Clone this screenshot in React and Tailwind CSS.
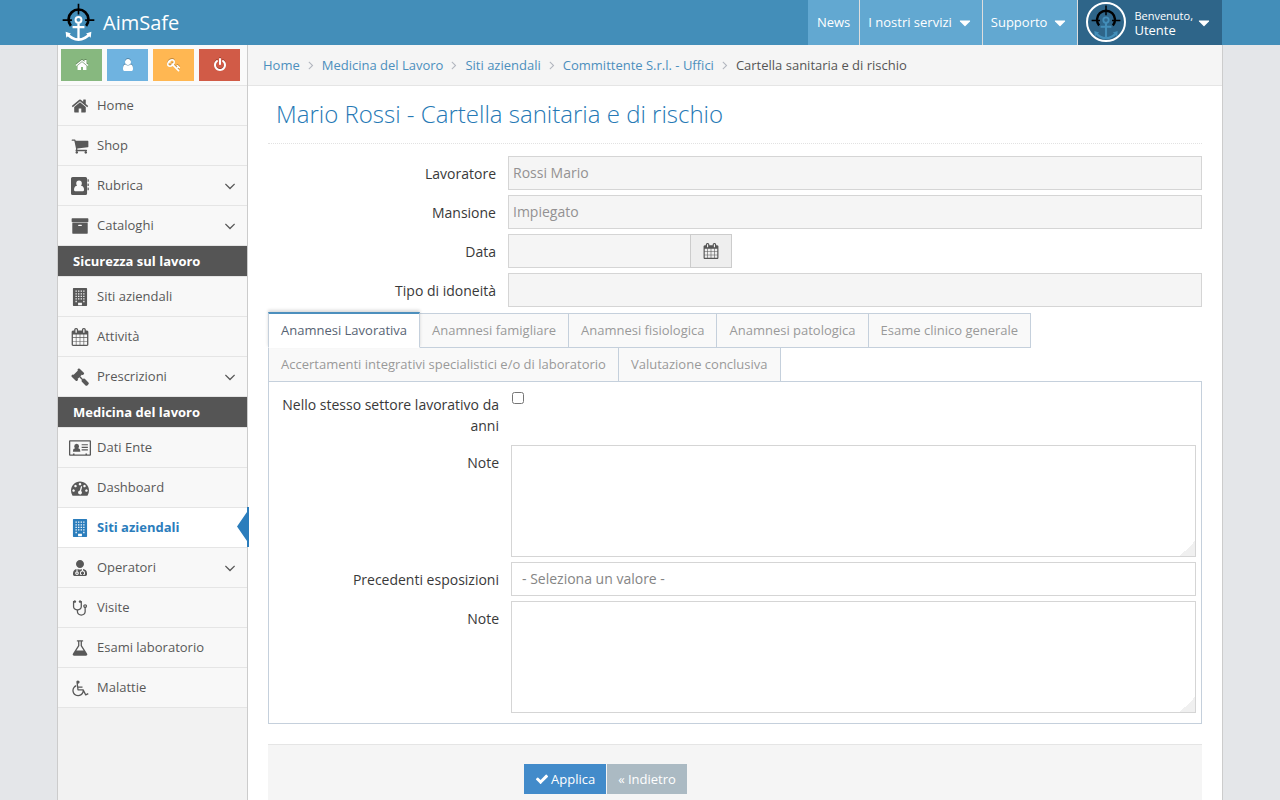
import React, { useState } from 'react';
import { FaUserMd } from 'react-icons/fa';

// single-path icons, all on a 1792 unit grid
const paths = {
  home: 'M1472 992v480q0 26-19 45t-45 19h-384v-384h-256v384h-384q-26 0-45-19t-19-45v-480q0-1 .5-3t.5-3l575-474 575 474q1 2 1 6zm223-69l-62 74q-8 9-21 11h-3q-13 0-21-7l-692-577-692 577q-12 8-24 7-13-2-21-11l-62-74q-8-10-7-23.5t11-21.5l719-599q32-26 76-26t76 26l244 204v-195q0-14 9-23t23-9h192q14 0 23 9t9 23v408l219 182q10 8 11 21.5t-7 23.5z',
  user: 'M1536 1399q0 109-62.5 187t-150.5 78h-854q-88 0-150.5-78t-62.5-187q0-85 8.5-160.5t31.5-152 58.5-131 94-89 134.5-34.5q131 128 313 128t313-128q76 0 134.5 34.5t94 89 58.5 131 31.5 152 8.5 160.5zm-256-887q0 159-112.5 271.5t-271.5 112.5-271.5-112.5-112.5-271.5 112.5-271.5 271.5-112.5 271.5 112.5 112.5 271.5z',
  key: 'M832 512q0-80-56-136t-136-56-136 56-56 136q0 42 19 83-41-19-83-19-80 0-136 56t-56 136 56 136 136 56 136-56 56-136q0-42-19-83 41 19 83 19 80 0 136-56t56-136zm851 704q0 17-49 66t-66 49q-9 0-28.5-16t-36.5-33-38.5-40-24.5-26l-96 96 220 220q28 28 28 68 0 42-39 81t-81 39q-40 0-68-28l-671-671q-176 131-365 131-163 0-265.5-102.5t-102.5-265.5q0-160 95-313t248-248 313-95q163 0 265.5 102.5t102.5 265.5q0 189-131 365l355 355 96-96q-3-3-26-24.5t-40-38.5-33-36.5-16-28.5q0-17 49-66t66-49q13 0 23 10 6 6 46 44.5t82 79.5 86.5 86 73 78 28.5 41z',
  power: 'M1664 896q0 156-61 298t-164 245-245 164-298 61-298-61-245-164-164-245-61-298q0-182 80.5-343t226.5-270q43-32 95.5-25t83.5 50q32 42 24.5 94.5t-49.5 84.5q-98 74-151.5 181t-53.5 228q0 104 40.5 198.5t109.5 163.5 163.5 109.5 198.5 40.5 198.5-40.5 163.5-109.5 109.5-163.5 40.5-198.5q0-121-53.5-228t-151.5-181q-42-32-49.5-84.5t24.5-94.5q31-43 84-50t95 25q146 109 226.5 270t80.5 343zm-640-768v640q0 52-38 90t-90 38-90-38-38-90v-640q0-52 38-90t90-38 90 38 38 90z',
  cart: 'M704 1536q0 52-38 90t-90 38-90-38-38-90 38-90 90-38 90 38 38 90zm896 0q0 52-38 90t-90 38-90-38-38-90 38-90 90-38 90 38 38 90zm128-1088v512q0 24-16.5 42.5t-40.5 21.5l-1044 122q13 60 13 70 0 16-24 64h920q26 0 45 19t19 45-19 45-45 19h-1024q-26 0-45-19t-19-45q0-11 8-31.5t16-36 21.5-40 15.5-29.5l-177-823h-204q-26 0-45-19t-19-45 19-45 45-19h256q16 0 28.5 6.5t19.5 15.5 13 24.5 8 26 5.5 29.5 4.5 26h1201q26 0 45 19t19 45z',
  book: 'M160 0h1280q160 0 160 160v1472q0 160-160 160h-1280q-160 0-160-160v-1472q0-160 160-160zM1650 224h70q50 0 50 50v160q0 50-50 50h-70zM1650 640h70q50 0 50 50v160q0 50-50 50h-70zM1650 1056h70q50 0 50 50v160q0 50-50 50h-70zM800 340q-280 0-280 290 0 150 90 250-310 20-310 420 0 110 100 110h800q100 0 100-110 0-400-310-420 90-100 90-250 0-290-280-290z',
  archive: 'M1088 832q0-26-19-45t-45-19h-256q-26 0-45 19t-19 45 19 45 45 19h256q26 0 45-19t19-45zm576-192v960q0 26-19 45t-45 19h-1408q-26 0-45-19t-19-45v-960q0-26 19-45t45-19h1408q26 0 45 19t19 45zm64-448v256q0 26-19 45t-45 19h-1536q-26 0-45-19t-19-45v-256q0-26 19-45t45-19h1536q26 0 45 19t19 45z',
  building: 'M256 0h1280q64 0 64 64v1664q0 64-64 64h-1280q-64 0-64-64v-1664q0-64 64-64zM448 256v128h128v-128zM704 256v128h128v-128zM960 256v128h128v-128zM1216 256v128h128v-128zM448 512v128h128v-128zM704 512v128h128v-128zM960 512v128h128v-128zM1216 512v128h128v-128zM448 768v128h128v-128zM704 768v128h128v-128zM960 768v128h128v-128zM1216 768v128h128v-128zM448 1024v128h128v-128zM704 1024v128h128v-128zM960 1024v128h128v-128zM1216 1024v128h128v-128zM448 1280v128h128v-128zM1216 1280v128h128v-128zM704 1472v256h384v-256z',
  calendar: 'M192 1664h288v-288h-288v288zm352 0h320v-288h-320v288zm-352-352h288v-320h-288v320zm352 0h320v-320h-320v320zm-352-384h288v-288h-288v288zm736 736h320v-288h-320v288zm-384-736h320v-288h-320v288zm768 736h288v-288h-288v288zm-384-352h320v-320h-320v320zm-352-864v-288q0-13-9.5-22.5t-22.5-9.5h-64q-13 0-22.5 9.5t-9.5 22.5v288q0 13 9.5 22.5t22.5 9.5h64q13 0 22.5-9.5t9.5-22.5zm736 864h288v-320h-288v320zm-384-384h320v-288h-320v288zm384 0h288v-288h-288v288zm32-480v-288q0-13-9.5-22.5t-22.5-9.5h-64q-13 0-22.5 9.5t-9.5 22.5v288q0 13 9.5 22.5t22.5 9.5h64q13 0 22.5-9.5t9.5-22.5zm384-64v1280q0 52-38 90t-90 38h-1408q-52 0-90-38t-38-90v-1280q0-52 38-90t90-38h128v-96q0-66 47-113t113-47h64q66 0 113 47t47 113v96h384v-96q0-66 47-113t113-47h64q66 0 113 47t47 113v96h128q52 0 90 38t38 90z',
  gavel: 'M1771 1536q0 53-37 90l-107 108q-39 37-91 37-53 0-90-37l-363-364q-38-36-38-90 0-53 43-96l-256-256-126 126q-14 14-34 14t-34-14q2 2 12.5 12t12.5 13 10 11.5 10 13.5 6 13.5 5.5 16.5 1.5 18q0 38-28 68-3 3-16.5 18t-19 20.5-18.5 16.5-22 15.5-22 9-26 4.5q-40 0-68-28l-408-408q-28-28-28-68 0-13 4.5-26t9-22 15.5-22 16.5-18.5 20.5-19 18-16.5q30-28 68-28 10 0 18 1.5t16.5 5.5 13.5 6 13.5 10 11.5 10 13 12.5 12 12.5q-14-14-14-34t14-34l348-348q14-14 34-14t34 14q-2-2-12.5-12t-12.5-13-10-11.5-10-13.5-6-13.5-5.5-16.5-1.5-18q0-38 28-68 3-3 16.5-18t19-20.5 18.5-16.5 22-15.5 22-9 26-4.5q40 0 68 28l408 408q28 28 28 68 0 13-4.5 26t-9 22-15.5 22-16.5 18.5-20.5 19-18 16.5q-30 28-68 28-10 0-18-1.5t-16.5-5.5-13.5-6-13.5-10-11.5-10-13-12.5-12-12.5q14 14 14 34t-14 34l-126 126 256 256q43-43 96-43 52 0 91 37l363 363q37 39 37 91z',
  card: 'M-100 128h1992q100 0 100 100v1336q0 100-100 100h-1992q-100 0-100-100v-1336q0-100 100-100zM-72 256v1280h264v-96h160v96h1088v-96h160v96h264v-1280zM560 480q240 0 240 250 0 120-80 200 210 20 210 290 0 60-60 60h-620q-60 0-60-60 0-270 210-290-80-80-80-200 0-250 240-250zM1060 512h620v120h-620zM1060 768h620v120h-620zM1060 1024h620v120h-620z',
  dashboard: 'M384 1152q0-53-37.5-90.5t-90.5-37.5-90.5 37.5-37.5 90.5 37.5 90.5 90.5 37.5 90.5-37.5 37.5-90.5zm192-448q0-53-37.5-90.5t-90.5-37.5-90.5 37.5-37.5 90.5 37.5 90.5 90.5 37.5 90.5-37.5 37.5-90.5zm428 481l101-382q6-26-7.5-48.5t-38.5-29.5-48 6.5-30 39.5l-101 382q-60 5-107 43.5t-63 98.5q-20 77 20 146t117 89 146-20 89-117q16-60-6-117t-72-91zm660-33q0-53-37.5-90.5t-90.5-37.5-90.5 37.5-37.5 90.5 37.5 90.5 90.5 37.5 90.5-37.5 37.5-90.5zm-640-640q0-53-37.5-90.5t-90.5-37.5-90.5 37.5-37.5 90.5 37.5 90.5 90.5 37.5 90.5-37.5 37.5-90.5zm448 192q0-53-37.5-90.5t-90.5-37.5-90.5 37.5-37.5 90.5 37.5 90.5 90.5 37.5 90.5-37.5 37.5-90.5zm320 448q0 261-141 483-19 29-54 29h-1402q-35 0-54-29-141-221-141-483 0-182 71-348t191-286 286-191 348-71 348 71 286 191 191 286 71 348z',
  stethoscope: 'M1472 704q0-26-19-45t-45-19-45 19-19 45 19 45 45 19 45-19 19-45zm128 0q0 62-35.5 111t-92.5 70v395q0 159-131.5 271.5t-316.5 112.5-316.5-112.5-131.5-271.5v-132q-164-20-274-128t-110-252v-512q0-26 19-45t45-19q6 0 16 2 17-30 47-48t65-18q53 0 90.5 37.5t37.5 90.5-37.5 90.5-90.5 37.5q-33 0-64-18v402q0 106 94 181t226 75 226-75 94-181v-402q-31 18-64 18-53 0-90.5-37.5t-37.5-90.5 37.5-90.5 90.5-37.5q35 0 65 18t47 48q10-2 16-2 26 0 45 19t19 45v512q0 144-110 252t-274 128v132q0 106 94 181t226 75 226-75 94-181v-395q-57-21-92.5-70t-35.5-111q0-80 56-136t136-56 136 56 56 136z',
  flask: 'M1591 1448q56 89 21.5 152.5t-140.5 63.5h-1152q-106 0-140.5-63.5t21.5-152.5l503-793v-399h-64q-26 0-45-19t-19-45 19-45 45-19h512q26 0 45 19t19 45-19 45-45 19h-64v399zm-779-725l-272 429h712l-272-429-20-31v-436h-128v436z',
  wheelchair: 'M1154 1118l102 204q-58 179-210 290t-339 111q-156 0-288.5-77.5t-210-210-77.5-288.5q0-181 104.5-330t274.5-211l17 131q-122 54-195 165.5t-73 244.5q0 185 131.5 316.5t316.5 131.5q126 0 232.5-65t165-175.5 49.5-236.5zm537 284l58 114-256 128q-13 7-29 7-40 0-57-35l-239-477h-472q-24 0-42.5-16.5t-21.5-40.5l-96-779q-2-17 6-42 14-51 57-82.5t97-31.5q66 0 113 47t47 113q0 69-52 117.5t-120 41.5l37 289h423v128h-407l16 128h455q40 0 57 35l228 455z',
  check: 'M1671 566q0 40-28 68l-724 724-136 136q-28 28-68 28t-68-28l-136-136-362-362q-28-28-28-68t28-68l136-136q28-28 68-28t68 28l294 295 656-657q28-28 68-28t68 28l136 136q28 28 28 68z',
  angleRight: 'M1171 960q0 13-10 23l-466 466q-10 10-23 10t-23-10l-50-50q-10-10-10-23t10-23l393-393-393-393q-10-10-10-23t10-23l50-50q10-10 23-10t23 10l466 466q10 10 10 23z',
  angleDown: 'M1395 736q0 13-10 23l-466 466q-10 10-23 10t-23-10l-466-466q-10-10-10-23t10-23l50-50q10-10 23-10t23 10l393 393 393-393q10-10 23-10t23 10l50 50q10 10 10 23z',
  caret: 'M1408 704q0 26-19 45l-448 448q-19 19-45 19t-45-19l-448-448q-19-19-19-45t19-45 45-19h896q26 0 45 19t19 45z',
};

function Icon({ name, className = '' }) {
  return (
    <svg viewBox="0 0 1792 1792" fill="currentColor" fillRule="evenodd" overflow="visible" aria-hidden="true" className={`shrink-0 ${className}`}>
      <path d={paths[name]} />
    </svg>
  );
}

function Logo({ anchor, className }) {
  return (
    <svg viewBox="0 0 100 116" fill="none" aria-hidden="true" className={className}>
      <g stroke="#000" strokeWidth="6">
        <path d="M27 68A30 30 0 1 1 73 68" strokeWidth="8" />
        <path d="M50 1V34M2 51H30M70 51H98" strokeWidth="5" />
      </g>
      <g stroke={anchor} strokeWidth="7">
        <circle cx="50" cy="50" r="9" strokeWidth="6" />
        <path d="M50 60V108M32 72H68" />
        <path d="M15 92Q30 110 50 110Q70 110 85 92" strokeWidth="8" />
      </g>
      <path d="M11 86L27 91L13 104ZM89 86L73 91L87 104Z" fill={anchor} />
    </svg>
  );
}

const shortcuts = [
  { icon: 'home', label: 'Home', color: 'bg-[#87b87f]' },
  { icon: 'user', label: 'Profilo', color: 'bg-[#6fb3e0]' },
  { icon: 'key', label: 'Password', color: 'bg-[#ffb752]' },
  { icon: 'power', label: 'Esci', color: 'bg-[#d15b47]' },
];

const menu = [
  { icon: 'home', label: 'Home' },
  { icon: 'cart', label: 'Shop' },
  { icon: 'book', label: 'Rubrica', sub: true },
  { icon: 'archive', label: 'Cataloghi', sub: true },
  { heading: 'Sicurezza sul lavoro' },
  { icon: 'building', label: 'Siti aziendali' },
  { icon: 'calendar', label: 'Attività' },
  { icon: 'gavel', label: 'Prescrizioni', sub: true },
  { heading: 'Medicina del lavoro' },
  { icon: 'card', label: 'Dati Ente' },
  { icon: 'dashboard', label: 'Dashboard' },
  { icon: 'building', label: 'Siti aziendali', active: true },
  { icon: 'doctor', label: 'Operatori', sub: true },
  { icon: 'stethoscope', label: 'Visite' },
  { icon: 'flask', label: 'Esami laboratorio' },
  { icon: 'wheelchair', label: 'Malattie' },
];

const crumbs = ['Home', 'Medicina del Lavoro', 'Siti aziendali', 'Committente S.r.l. - Uffici'];

const tabs = [
  'Anamnesi Lavorativa',
  'Anamnesi famigliare',
  'Anamnesi fisiologica',
  'Anamnesi patologica',
  'Esame clinico generale',
  'Accertamenti integrativi specialistici e/o di laboratorio',
  'Valutazione conclusiva',
];

function MenuIcon({ name }) {
  if (name === 'doctor') return <FaUserMd className="size-4" />;
  return <Icon name={name} className="size-[18px]" />;
}

function Navbar() {
  return (
    <header className="bg-[#438eb9] text-white">
      <div className="mx-auto flex h-[45px] max-w-[1164px] justify-between">
        <a href="#" className="flex items-center gap-2 pl-1 text-xl">
          <Logo anchor="#fff" className="h-[39px] w-[33px]" />
          AimSafe
        </a>
        <nav className="flex text-[13px]">
          <a href="#" className="flex items-center bg-[#62a8d1] px-[9px]">News</a>
          <a href="#" className="flex items-center gap-1 border-l border-[#ddd] bg-[#62a8d1] px-2">
            I nostri servizi
            <Icon name="caret" className="size-[18px]" />
          </a>
          <a href="#" className="flex items-center gap-1 border-l border-[#ddd] bg-[#62a8d1] px-2">
            Supporto
            <Icon name="caret" className="size-[18px]" />
          </a>
          <a href="#" className="flex items-center border-l border-[#ddd] bg-[#2e6589] pr-[9px] pl-2">
            <span className="mr-2 mb-px flex size-10 items-center justify-center rounded-full border-2 border-white">
              <Logo anchor="#438eb9" className="h-[35px] w-[30px]" />
            </span>
            <span className="leading-[15px]">
              <small className="block text-[11px]">Benvenuto,</small>
              Utente
            </span>
            <Icon name="caret" className="ml-[2px] size-[18px]" />
          </a>
        </nav>
      </div>
    </header>
  );
}

function Sidebar() {
  return (
    <aside className="w-[190px] shrink-0 border-r border-[#ccc] bg-[#f2f2f2]">
      <div className="flex h-[41px] items-center gap-[5px] border-b border-[#e5e5e5] bg-[#fafafa] px-[3px]">
        {shortcuts.map((s) => (
          <button key={s.label} type="button" aria-label={s.label} className={`flex h-8 w-[41px] items-center justify-center text-white ${s.color}`}>
            <Icon name={s.icon} className="size-[14px] drop-shadow-[0_-1px_0_rgba(0,0,0,0.25)]" />
          </button>
        ))}
      </div>
      <ul>
        {menu.map((item, i) =>
          item.heading ? (
            <li key={i} className="border-b border-[#e5e5e5] bg-[#555] pl-[15px] text-[13px] leading-[30px] font-bold text-white">
              {item.heading}
            </li>
          ) : (
            <li key={i} className="relative border-b border-[#e5e5e5]">
              <a
                href="#"
                className={`flex h-[39px] items-center pr-2 pl-3 text-[13px] ${item.active ? 'bg-white font-bold text-[#2b7dbc]' : 'bg-[#f8f8f8] text-[#585858]'}`}
              >
                <span className="mr-2 flex w-[19px] justify-center">
                  <MenuIcon name={item.icon} />
                </span>
                {item.label}
                {item.sub && <Icon name="angleDown" className="ml-auto size-[18px]" />}
              </a>
              {item.active && (
                <svg viewBox="0 0 12 40" aria-hidden="true" className="absolute -top-px -right-[2px] h-10 w-3 fill-[#2b7dbc]">
                  <path d="M12 0H10V5L0 19.500L10 34V40H12Z" />
                </svg>
              )}
            </li>
          )
        )}
      </ul>
    </aside>
  );
}

function Row({ label, id, children }) {
  return (
    <div className="mb-[5px] flex items-start">
      <label htmlFor={id} className="w-60 shrink-0 pt-[7px] pr-3 pb-1 text-right leading-[21px] text-[#393939]">{label}</label>
      <div className="flex min-w-0 flex-1">{children}</div>
    </div>
  );
}

const inputClass = 'h-[34px] w-full min-w-0 border border-[#d5d5d5] bg-[#f5f5f5] px-1 pb-[2px] text-[#939192]';
const areaClass =
  'block h-28 w-full resize-y border border-[#d5d5d5] bg-white px-1 py-[3px] text-[#858585] [&::-webkit-resizer]:bg-[linear-gradient(135deg,transparent_50%,#f0f0f0_50%)]';

export default function App() {
  const [tab, setTab] = useState(0);

  return (
    <div className="flex h-screen flex-col overflow-hidden bg-[#e4e6e9] font-['Open_Sans',sans-serif] text-sm text-[#393939]">
      <Navbar />
      <div className="mx-auto flex w-full max-w-[1166px] flex-1 border-x border-[#ccc] bg-white">
        <Sidebar />
        <main className="min-w-0 flex-1">
          <nav className="flex h-[41px] items-center border-b border-[#e5e5e5] bg-[#f5f5f5] px-[15px] text-[13px]">
            {crumbs.map((c) => (
              <React.Fragment key={c}>
                <a href="#" className="text-[#4c8fbd]">{c}</a>
                <Icon name="angleRight" className="mx-1 size-[14px] text-[#b2b6bf]" />
              </React.Fragment>
            ))}
            <span className="text-[#555]">Cartella sanitaria e di rischio</span>
          </nav>

          <div className="px-5">
            <div className="border-b border-dotted border-[#e2e2e2] px-2 pt-3 pb-[13px]">
              <h1 className="text-2xl font-light text-[#2679b5]">Mario Rossi - Cartella sanitaria e di rischio</h1>
            </div>

            <form className="pt-3" onSubmit={(e) => e.preventDefault()}>
              <Row label="Lavoratore" id="lavoratore">
                <input id="lavoratore" disabled defaultValue="Rossi Mario" className={inputClass} />
              </Row>
              <Row label="Mansione" id="mansione">
                <input id="mansione" disabled defaultValue="Impiegato" className={inputClass} />
              </Row>
              <Row label="Data" id="data">
                <div className="flex w-56">
                  <input id="data" disabled className={inputClass} />
                  <button type="button" aria-label="Calendario" className="-ml-px flex w-[42px] shrink-0 items-center justify-center border border-[#ccc] bg-[#eee] text-[#555]">
                    <Icon name="calendar" className="size-4" />
                  </button>
                </div>
              </Row>
              <Row label="Tipo di idoneità" id="idoneita">
                <input id="idoneita" disabled className={inputClass} />
              </Row>

              <div role="tablist" className="flex flex-wrap pt-px pl-px text-[13px]">
                {tabs.map((t, i) => (
                  <button
                    key={t}
                    type="button"
                    role="tab"
                    aria-selected={tab === i}
                    onClick={() => setTab(i)}
                    className={`-mb-px -ml-px border px-3 pb-[2px] leading-4 ${
                      tab === i
                        ? 'relative -mt-px h-9 border-t-2 border-[#c5d0dc] border-t-[#4c8fbd] border-b-transparent bg-white text-[#576373] shadow-[0_-2px_3px_0_rgba(0,0,0,0.15)]'
                        : 'h-[35px] border-[#c5d0dc] bg-[#f9f9f9] text-[#999]'
                    }`}
                  >
                    {t}
                  </button>
                ))}
              </div>

              <div role="tabpanel" className="border border-[#c5d0dc] pt-[5px] pr-[5px] pb-[5px] pl-[2px]">
                <Row label="Nello stesso settore lavorativo da anni" id="settore">
                  <input id="settore" type="checkbox" className="mt-[5px] ml-px size-3" />
                </Row>
                <Row label="Note" id="note1">
                  <textarea id="note1" className={areaClass} />
                </Row>
                <Row label="Precedenti esposizioni" id="esposizioni">
                  <select id="esposizioni" className="h-[34px] w-full appearance-none border border-[#d5d5d5] bg-white px-[10px] text-[#858585]">
                    <option>- Seleziona un valore -</option>
                  </select>
                </Row>
                <Row label="Note" id="note2">
                  <textarea id="note2" className={areaClass} />
                </Row>
              </div>

              <div className="mt-5 flex gap-px border-t border-[#e5e5e5] bg-[#f5f5f5] py-[19px] pl-64 text-[13px] text-white [text-shadow:0_-1px_0_rgba(0,0,0,0.25)]">
                <button type="submit" className="flex h-[30px] items-center gap-[2px] bg-[#428bca] px-[11px]">
                  <Icon name="check" className="size-[14px]" />
                  Applica
                </button>
                <button type="button" className="h-[30px] bg-[#abbac3] px-[11px]">« Indietro</button>
              </div>
            </form>
          </div>
        </main>
      </div>
    </div>
  );
}
